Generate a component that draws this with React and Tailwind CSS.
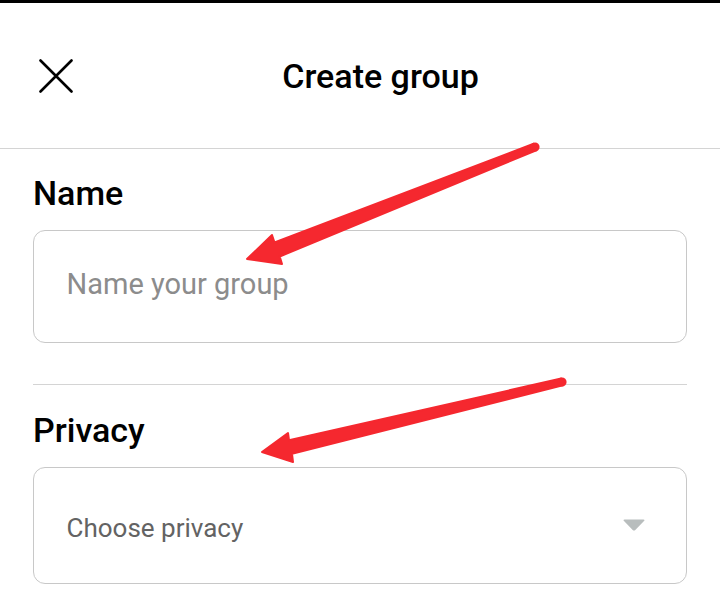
import { useState } from 'react'

function CloseIcon() {
  return (
    <svg width="34" height="34" viewBox="0 0 34 34" className="shrink-0">
      <path d="M1.5 1.5 L32.5 32.5 M32.5 1.5 L1.5 32.5" stroke="#000" strokeWidth="2.6" strokeLinecap="round" />
    </svg>
  )
}

function Arrows() {
  return (
    <svg width="720" height="608" viewBox="0 0 720 608" className="absolute inset-0 pointer-events-none">
      <g fill="#f5282f" stroke="#f5282f" strokeWidth="2" strokeLinejoin="round">
        <polygon points="247,259 272,235 274.5,242.5 533.7,143.7 536.3,150.3 279.7,256.5 282,264" />
        <circle cx="535" cy="147" r="3.6" />
        <polygon points="262,452 288,433 289,440.2 561.2,378.6 562.8,385.4 292,453.8 293,462" />
        <circle cx="562" cy="382" r="3.6" />
      </g>
    </svg>
  )
}

export default function App() {
  const [name, setName] = useState('')

  return (
    <div className="relative w-[720px] h-[608px] bg-white overflow-hidden font-['Roboto',sans-serif]">
      <div className="h-[3px] bg-black" />

      {/* header */}
      <div className="h-[145px] flex items-center pl-[39px] pr-[32px]">
        <CloseIcon />
        <h1 className="flex-1 text-center text-[34px] leading-[34px] font-medium text-black">Create group</h1>
      </div>
      <div className="h-px bg-[#d4d4d4]" />

      <div className="px-[33px] pt-[24px]">
        <label className="block text-[34px] leading-[40px] font-medium text-black mb-[17px]">Name</label>
        <input
          value={name}
          onChange={e => setName(e.target.value)}
          placeholder="Name your group"
          className="block w-full h-[113px] box-border border-[1.5px] border-[#c8c8c8] rounded-[12px] pl-[32.5px] pr-4 pt-0 pb-[5px] text-[29px] leading-[29px] text-black placeholder:text-[#8c8c8c] outline-none"
        />

        <div className="h-px bg-[#d4d4d4] mt-[41px]" />

        <label className="block mt-[25px] text-[34px] leading-[40px] font-medium text-black mb-[16.6px]">Privacy</label>
        <div className="h-[117px] border-[1.5px] border-[#c8c8c8] rounded-[12px] flex items-center justify-between pl-[32.5px] pr-[40px]">
          <span className="block pt-[5px] text-[26px] leading-[26px] text-[#636363]">Choose privacy</span>
          <svg width="24" height="14" viewBox="0 0 24 14">
            <path d="M2.5 1.5 H21.5 Q23.5 1.5 22 3 L13.3 12 Q12 13.2 10.7 12 L2 3 Q0.5 1.5 2.5 1.5 Z" fill="#b8bdbd" />
          </svg>
        </div>
      </div>

      <Arrows />
    </div>
  )
}
